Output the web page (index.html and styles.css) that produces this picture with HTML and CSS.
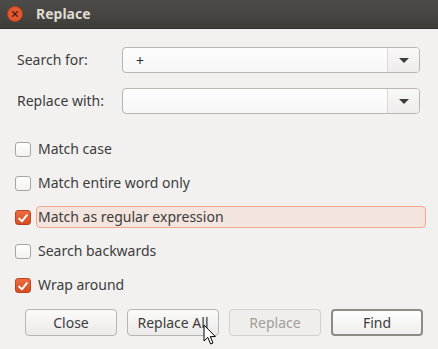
FILE: index.html
```html
<!DOCTYPE html>
<html>
<head>
<meta charset="utf-8">
<link rel="stylesheet" href="styles.css">
</head>
<body>
<div class="window">
  <div class="titlebar">
    <span class="close-btn"><svg width="16" height="16" viewBox="0 0 16 16"><circle cx="8" cy="8" r="7.5" fill="#e4572d" stroke="#b5401c" stroke-width="0.8"/><path d="M5.6 5.6 L10.4 10.4 M10.4 5.6 L5.6 10.4" stroke="#3a1a10" stroke-width="1.3" stroke-linecap="round"/></svg></span>
    <span class="title">Replace</span>
  </div>
  <div class="content">
    <div class="form">
      <label class="flabel">Search for:</label>
      <div class="combo"><span class="combo-text">+</span><span class="combo-btn"><span class="arrow"></span></span></div>
      <label class="flabel">Replace with:</label>
      <div class="combo"><span class="combo-text"></span><span class="combo-btn"><span class="arrow"></span></span></div>
    </div>
    <div class="checks">
      <div class="check-row"><span class="cb"></span><span class="clabel">Match case</span></div>
      <div class="check-row"><span class="cb"></span><span class="clabel">Match entire word only</span></div>
      <div class="check-row"><span class="cb checked"><svg width="15" height="15" viewBox="0 0 15 15"><path d="M3.4 7.6 L6.3 10.5 L11.6 4" fill="none" stroke="#fff" stroke-width="2.1" stroke-linecap="round" stroke-linejoin="round"/></svg></span><span class="clabel focus">Match as regular expression</span></div>
      <div class="check-row"><span class="cb"></span><span class="clabel">Search backwards</span></div>
      <div class="check-row"><span class="cb checked"><svg width="15" height="15" viewBox="0 0 15 15"><path d="M3.4 7.6 L6.3 10.5 L11.6 4" fill="none" stroke="#fff" stroke-width="2.1" stroke-linecap="round" stroke-linejoin="round"/></svg></span><span class="clabel">Wrap around</span></div>
    </div>
    <div class="buttons">
      <button class="btn">Close</button>
      <button class="btn">Replace All</button>
      <button class="btn disabled">Replace</button>
      <button class="btn default">Find</button>
    </div>
  </div>
  <svg class="cursor" width="14" height="22" viewBox="0 0 14 22"><path d="M1 1 L1 17 L4.8 13.4 L7.6 20 L10 19 L7.3 12.6 L12.4 12.6 Z" fill="#fff" stroke="#000" stroke-width="1" stroke-linejoin="round"/></svg>
</div>
</body>
</html>
```
FILE: styles.css
```css
html, body {
  margin: 0;
  padding: 0;
}
body {
  width: 438px;
  height: 349px;
  overflow: hidden;
  font-family: "Noto Sans", "Open Sans", sans-serif;
  font-size: 14px;
  color: #3c3c3c;
  background: #f2f1f0;
}
.window {
  position: relative;
  width: 438px;
  height: 349px;
}
.titlebar {
  height: 29px;
  background: linear-gradient(#4d4c48, #3e3d39);
  display: flex;
  align-items: center;
  border-bottom: 1px solid #2f2e2b;
  box-sizing: border-box;
}
.close-btn {
  display: flex;
  margin-left: 7px;
  margin-top: -1px;
}
.title {
  margin-left: 13px;
  font-weight: bold;
  font-size: 14px;
  color: #dfdbd2;
  margin-top: -1px;
}
.content {
  padding: 18px 14px 0 17px;
}
.form {
  display: grid;
  grid-template-columns: 105px 298px;
  row-gap: 15px;
  align-items: center;
}
.flabel {
  line-height: 26px;
}
.combo {
  height: 26px;
  box-sizing: border-box;
  border: 1px solid #b8b5b2;
  border-radius: 4px;
  background: linear-gradient(#fdfdfd, #f7f7f7);
  display: flex;
  align-items: center;
}
.combo-text {
  flex: 1;
  padding-left: 13px;
  color: #2e2e2e;
}
.combo-btn {
  width: 31px;
  height: 100%;
  border-left: 1px solid #dcdad8;
  display: flex;
  align-items: center;
  justify-content: center;
  background: linear-gradient(#f8f8f7, #eeedec);
  border-radius: 0 3px 3px 0;
}
.arrow {
  width: 0;
  height: 0;
  border-left: 5px solid transparent;
  border-right: 5px solid transparent;
  border-top: 5px solid #3c3c3c;
}
.checks {
  margin-top: 24px;
  display: flex;
  flex-direction: column;
  gap: 12px;
}
.check-row {
  display: flex;
  align-items: center;
  height: 22px;
}
.cb {
  width: 16px;
  height: 15px;
  box-sizing: border-box;
  border: 1px solid #a7a5a3;
  border-radius: 3px;
  background: linear-gradient(#ffffff, #f3f2f1);
  margin-left: -2px;
  display: flex;
}
.cb.checked {
  border-color: #b8451f;
  background: linear-gradient(#ee6b3f, #d74d1f);
}
.clabel {
  margin-left: 5px;
  height: 22px;
  line-height: 20px;
  box-sizing: border-box;
  border: 1px solid transparent;
  border-radius: 4px;
  padding-left: 1px;
}
.clabel.focus {
  flex: 0 0 390px;
  background: #f3e4dd;
  border-color: #f2a88f;
}
.buttons {
  margin-top: 13px;
  margin-left: 8px;
  display: flex;
  gap: 10px;
}
.btn {
  width: 92px;
  height: 27px;
  box-sizing: border-box;
  font-family: inherit;
  font-size: 14px;
  color: #3c3c3c;
  border: 1px solid #b7b4b1;
  border-radius: 4px;
  background: linear-gradient(#fbfbfa, #eceae8);
  padding: 0;
}
.btn.disabled {
  color: #a19d99;
  background: #efeeec;
  border-color: #d3d0cd;
}
.btn.default {
  border: 2px solid #8e8b87;
  background: linear-gradient(#fdfdfd, #f0efee);
}
.cursor {
  position: absolute;
  left: 203px;
  top: 324px;
}
```
